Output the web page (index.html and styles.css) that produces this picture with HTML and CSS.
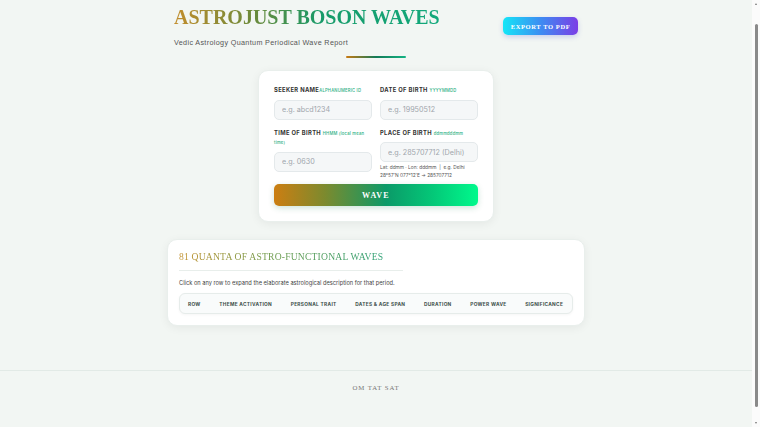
FILE: index.html
```html
<!DOCTYPE html>
<html lang="en">
<head>
<meta charset="utf-8">
<title>AstroJust Boson Waves</title>
<link rel="stylesheet" href="styles.css">
</head>
<body>
<div class="wrap">
  <header class="header">
    <div class="brand">
      <h1 class="title">ASTROJUST BOSON WAVES</h1>
      <p class="subtitle">Vedic Astrology Quantum Periodical Wave Report</p>
    </div>
    <button class="export">EXPORT TO PDF</button>
  </header>
  <div class="divider"></div>

  <section class="form-card">
    <div class="grid">
      <div class="field">
        <label class="label">SEEKER NAME<span class="hint">ALPHANUMERIC ID</span></label>
        <input class="input" placeholder="e.g. abcd1234">
      </div>
      <div class="field">
        <label class="label">DATE OF BIRTH <span class="hint">YYYYMMDD</span></label>
        <input class="input" placeholder="e.g. 19950512">
      </div>
      <div class="field">
        <label class="label">TIME OF BIRTH <span class="hint">HHMM (local mean time)</span></label>
        <input class="input" placeholder="e.g. 0630">
      </div>
      <div class="field">
        <label class="label">PLACE OF BIRTH <span class="hint">ddmmdddmm</span></label>
        <input class="input" placeholder="e.g. 285707712 (Delhi)">
        <p class="help">Lat: ddmm · Lon: dddmm &nbsp;|&nbsp; e.g. Delhi<br>28°57'N 077°12'E → 285707712</p>
      </div>
    </div>
    <button class="wave">WAVE</button>
  </section>

  <section class="table-card">
    <h2 class="quanta">81 QUANTA OF ASTRO-FUNCTIONAL WAVES</h2>
    <p class="desc">Click on any row to expand the elaborate astrological description for that period.</p>
    <div class="thead">
      <span>ROW</span>
      <span>THEME ACTIVATION</span>
      <span>PERSONAL TRAIT</span>
      <span>DATES &amp; AGE SPAN</span>
      <span>DURATION</span>
      <span>POWER WAVE</span>
      <span>SIGNIFICANCE</span>
    </div>
  </section>
</div>
<footer class="footer">OM TAT SAT</footer>
<div class="scrollbar" aria-hidden="true">
  <span class="arrow up"></span>
  <span class="thumb"></span>
  <span class="arrow down"></span>
</div>
</body>
</html>
```
FILE: styles.css
```css
* { box-sizing: border-box; }
html, body { margin: 0; padding: 0; }
body {
  background: #f2f6f3;
  font-family: "Inter", "Liberation Sans", sans-serif;
  color: #333;
  margin-right: 8px;
}
.wrap {
  width: 418px;
  margin: 0 auto;
}
.header {
  display: flex;
  justify-content: space-between;
  align-items: flex-start;
  padding: 5px 7px 0;
}
.title {
  margin: 0;
  font-family: "Liberation Serif", serif;
  font-weight: 700;
  font-size: 20px;
  line-height: 25px;
  letter-spacing: 0;
  background: linear-gradient(90deg, #c28d2c 0%, #6b8a3a 30%, #179a68 55%, #12a97c 100%);
  -webkit-background-clip: text;
  background-clip: text;
  color: transparent;
  white-space: nowrap;
}
.subtitle {
  margin: 8px 0 0;
  font-family: "Liberation Sans", sans-serif;
  font-size: 7.2px;
  letter-spacing: 0.35px;
  color: #555;
}
.export {
  margin-top: 12px;
  width: 75px;
  height: 18px;
  border: 0;
  border-radius: 5px;
  background: linear-gradient(90deg, #14e6f7 0%, #3d8cf2 50%, #7b3ee6 100%);
  color: #fff;
  font-family: "Liberation Serif", serif;
  font-weight: 700;
  font-size: 6.5px;
  letter-spacing: 0.6px;
  box-shadow: 0 2px 5px rgba(80, 90, 220, 0.25);
  padding: 0;
}
.divider {
  width: 60px;
  height: 2px;
  margin: 9px auto 12px;
  background: linear-gradient(90deg, #c97a12 0%, #137a57 50%, #14b383 100%);
  border-radius: 1px;
}
.form-card {
  width: 236px;
  margin: 0 auto;
  background: #fff;
  border-radius: 10px;
  padding: 15px;
  box-shadow: 0 2px 10px rgba(0, 0, 0, 0.06);
  border: 1px solid #e9efec;
}
.grid {
  display: grid;
  grid-template-columns: 98px 98px;
  column-gap: 8px;
  row-gap: 9px;
}
.field {
  display: flex;
  flex-direction: column;
}
.label {
  font-family: "Inter", sans-serif;
  font-weight: 700;
  font-size: 5.8px;
  letter-spacing: 0.35px;
  color: #333;
  line-height: 8.5px;
  margin-bottom: 4px;
}
.hint {
  font-weight: 500;
  font-size: 4.2px;
  letter-spacing: 0.2px;
  color: #1fae80;
}
.input {
  height: 20px;
  width: 100%;
  border: 1px solid #e4e9eb;
  background: #f5f7f8;
  border-radius: 5px;
  padding: 0 7px;
  font-family: "Inter", sans-serif;
  font-size: 7.2px;
  color: #333;
  outline: none;
}
.input::placeholder { color: #a0a6ac; }
.help {
  margin: 2px 0 0;
  font-size: 4.8px;
  line-height: 7.5px;
  color: #555;
}
.wave {
  display: block;
  width: 100%;
  height: 22px;
  margin-top: 5px;
  border: 0;
  border-radius: 5px;
  background: linear-gradient(90deg, #cc7e12 0%, #7c8a2e 25%, #0b9a68 55%, #04c878 78%, #00f98c 100%);
  color: #fff;
  font-family: "Liberation Serif", serif;
  font-weight: 700;
  font-size: 8px;
  letter-spacing: 1.2px;
  box-shadow: 0 2px 6px rgba(0, 120, 70, 0.2);
}
.table-card {
  margin-top: 17px;
  background: #fff;
  border-radius: 10px;
  padding: 11px 11px 11px;
  box-shadow: 0 2px 10px rgba(0, 0, 0, 0.06);
  border: 1px solid #e9efec;
}
.quanta {
  display: block;
  margin: 0;
  padding: 0 0 7px;
  width: 224px;
  border-bottom: 1px solid #e8eeeb;
  font-family: "Liberation Serif", serif;
  font-weight: 400;
  font-size: 9.6px;
  line-height: 12px;
  letter-spacing: 0.2px;
  white-space: nowrap;
}
.quanta {
  background-image: linear-gradient(90deg, #c2902c 0%, #6f9a4a 40%, #1ea07a 100%);
  -webkit-background-clip: text;
  background-clip: text;
  color: transparent;
}
.desc {
  margin: 8px 0 7px;
  font-size: 5.7px;
  line-height: 7px;
  color: #444;
}
.thead {
  display: flex;
  gap: 18.7px;
  align-items: center;
  height: 21px;
  padding: 0 8px;
  border: 1px solid #e6ecea;
  border-radius: 6px;
  background: #f9fbfb;
  box-shadow: 0 1px 3px rgba(0, 0, 0, 0.04);
  font-size: 4.8px;
  font-weight: 700;
  letter-spacing: 0.3px;
  color: #3d4f4a;
  white-space: nowrap;
}
.footer {
  margin-top: 44px;
  border-top: 1px solid #e2eae6;
  padding: 13px 0 62px;
  text-align: center;
  font-family: "Liberation Serif", serif;
  font-size: 6.8px;
  letter-spacing: 0.9px;
  color: #777;
}
.scrollbar {
  position: fixed;
  top: 0;
  right: 0;
  width: 8px;
  height: 100%;
  background: #fbfbfb;
  display: flex;
  flex-direction: column;
  align-items: center;
  padding: 3px 0;
}
.arrow {
  width: 0;
  height: 0;
  border-left: 1.5px solid transparent;
  border-right: 1.5px solid transparent;
}
.arrow.up { border-bottom: 2px solid #777; }
.arrow.down { border-top: 2px solid #777; }
.thumb {
  width: 3px;
  flex: 1;
  margin: 19px 0 15px;
  background: #8a8a8a;
  border-radius: 2px;
}
```
